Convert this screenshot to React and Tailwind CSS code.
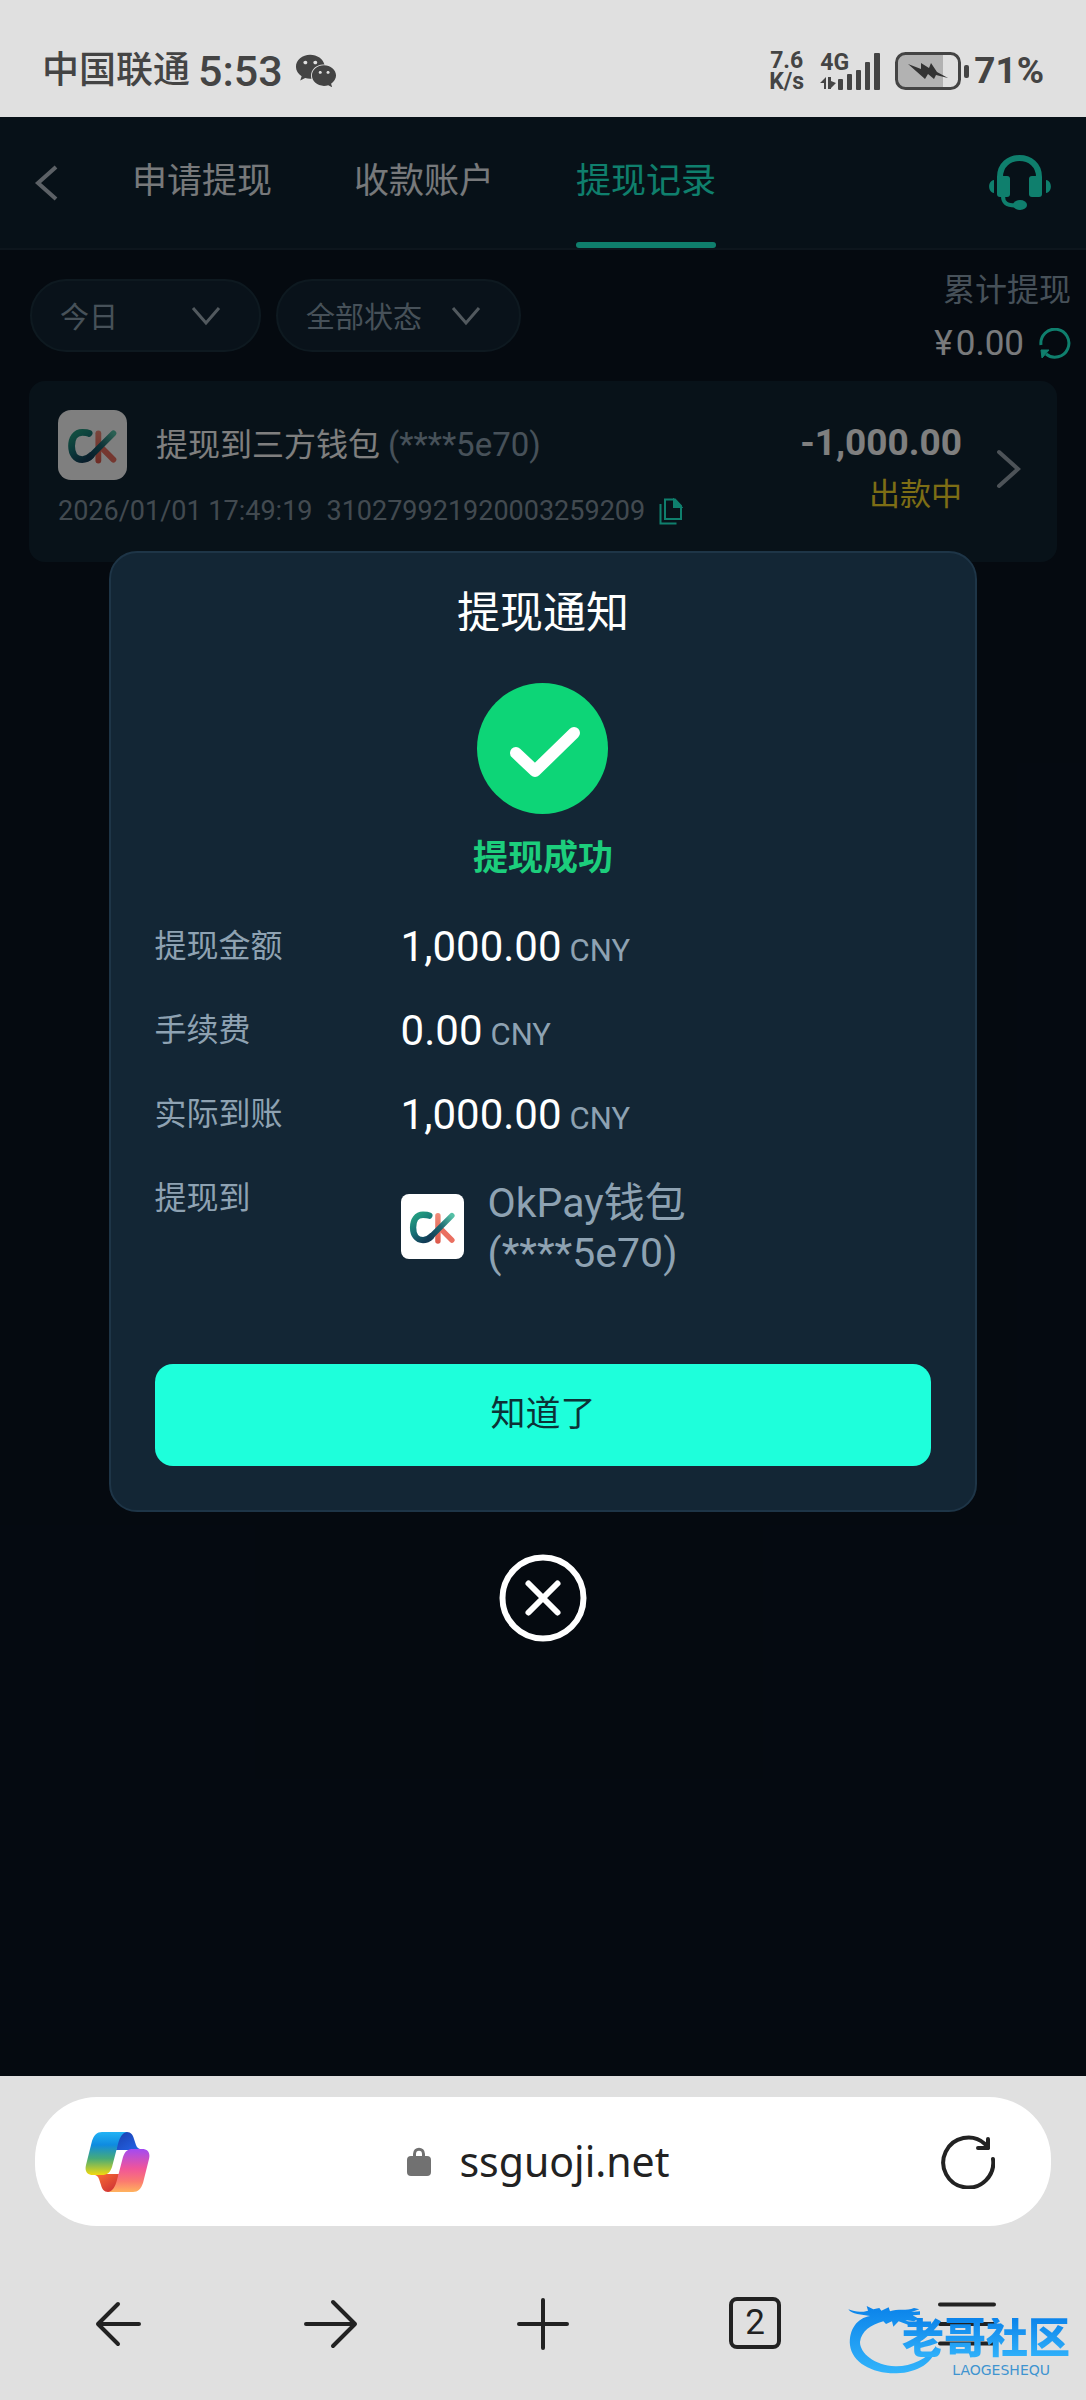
import React, { useState } from 'react';
import { FaWeixin } from 'react-icons/fa';

const tabs = ['申请提现', '收款账户', '提现记录'];

const details = [
  { label: '提现金额', value: '1,000.00' },
  { label: '手续费', value: '0.00' },
  { label: '实际到账', value: '1,000.00' },
];

const WalletLogo = ({ id, className }) => (
  <span className={`flex shrink-0 items-center justify-center bg-white ${className}`}>
    <svg viewBox="0 0 69 72" className="h-full w-full" fill="none" strokeLinecap="round">
      <defs>
        <linearGradient id={`${id}-c`} gradientUnits="userSpaceOnUse" x1="14" y1="26" x2="30" y2="50">
          <stop offset="0" stopColor="#22997f" />
          <stop offset="0.5" stopColor="#167076" />
          <stop offset="1" stopColor="#123c56" />
        </linearGradient>
        <linearGradient id={`${id}-k`} gradientUnits="userSpaceOnUse" x1="30" y1="48" x2="56" y2="24">
          <stop offset="0" stopColor="#123c56" />
          <stop offset="0.5" stopColor="#1d6670" />
          <stop offset="1" stopColor="#55c0a6" />
        </linearGradient>
        <linearGradient id={`${id}-r`} gradientUnits="userSpaceOnUse" x1="40" y1="22" x2="40" y2="54">
          <stop offset="0" stopColor="#f08a78" />
          <stop offset="1" stopColor="#dd5a4c" />
        </linearGradient>
      </defs>
      <path d="M40.500 24V52" stroke={`url(#${id}-r)`} strokeWidth="6" />
      <path d="M45 40L56 51" stroke="#ea6f60" strokeWidth="6" />
      <path d="M31 24C29 23 26 23 24 23C17 23 13 29 13 37C13 45 17 51 24 51C27.500 51 30 50 33 47" stroke={`url(#${id}-c)`} strokeWidth="7" />
      <path d="M31 49L56 24" stroke={`url(#${id}-k)`} strokeWidth="6" />
    </svg>
  </span>
);

const HeadsetIcon = () => (
  <svg viewBox="0 0 62 56" className="h-14 w-[62px]" fill="#1effdb">
    <path d="M11 25V22C11 10 20 3 30.500 3C41 3 50 10 50 22V25" fill="none" stroke="#1effdb" strokeWidth="6" />
    <rect x="8" y="21" width="13" height="21" rx="3" />
    <rect x="40" y="21" width="13" height="21" rx="3" />
    <path d="M5 25C-1.500 26 -1.500 37 5 38ZM57 25C63.500 26 63.500 37 57 38Z" />
    <path d="M14 41C14 48 18 50.500 26 50.500" fill="none" stroke="#1effdb" strokeWidth="4" />
    <ellipse cx="31" cy="50" rx="7" ry="5" />
  </svg>
);

// the lower ribbon is the upper one turned by half a circle
const CopilotIcon = () => (
  <svg viewBox="0 0 65 60" className="h-[60px] w-[65px]">
    <defs>
      <linearGradient id="cp-left" x1="0" y1="0" x2="0" y2="1">
        <stop offset="0" stopColor="#22b3f5" />
        <stop offset="0.300" stopColor="#0f8be0" />
        <stop offset="0.620" stopColor="#47ab78" />
        <stop offset="1" stopColor="#f3d90e" />
      </linearGradient>
      <linearGradient id="cp-right" x1="0" y1="1" x2="0" y2="0">
        <stop offset="0" stopColor="#a24af2" />
        <stop offset="0.450" stopColor="#f0559a" />
        <stop offset="0.750" stopColor="#fb7a70" />
        <stop offset="1" stopColor="#ffb35e" />
      </linearGradient>
      <linearGradient id="cp-top" x1="0" y1="0" x2="1" y2="1">
        <stop offset="0" stopColor="#1a3fae" />
        <stop offset="1" stopColor="#2467ea" />
      </linearGradient>
      <linearGradient id="cp-bottom" x1="0" y1="0" x2="1" y2="1">
        <stop offset="0" stopColor="#c92a36" />
        <stop offset="1" stopColor="#ff7433" />
      </linearGradient>
    </defs>
    <path d="M38 0H42C46 0 48 3 49 7L51 13C52 16 54 17 58 18H31L33 6Z" fill="url(#cp-top)" />
    <path d="M38 0H42C46 0 48 3 49 7L51 13C52 16 54 17 58 18H31L33 6Z" fill="url(#cp-bottom)" transform="rotate(180 32.500 30)" />
    <path d="M17 0H42C37 1 35 5 33 12L27 35C25 41 22 43 17 43H8C2 43 -0.500 39 1 33L7 9C9 3 12 0 17 0Z" fill="url(#cp-left)" />
    <path d="M17 0H42C37 1 35 5 33 12L27 35C25 41 22 43 17 43H8C2 43 -0.500 39 1 33L7 9C9 3 12 0 17 0Z" fill="url(#cp-right)" transform="rotate(180 32.500 30)" />
  </svg>
);

const StatusBar = () => (
  <header className="flex items-center justify-between bg-[#e0e0e0] px-[42px] pt-[47px] pb-[22px] text-[#444]">
    <div className="flex h-12 items-center gap-2 font-medium">
      <span className="text-[37px]">中国联通</span>
      <span className="text-[43px]">5:53</span>
      <FaWeixin size={42} className="ml-1" />
    </div>
    <div className="flex h-12 items-center">
      <div className="mr-4 text-center text-[23px] leading-[21px] font-bold">
        <div>7.6</div>
        <div>K/s</div>
      </div>
      <div className="relative h-[38px] w-[61px]">
        <span className="absolute top-0 left-0 text-[23px] leading-[21px] font-bold">4G</span>
        <svg viewBox="0 0 61 38" className="h-full w-full" fill="#444">
          <path d="M0 31L6 25V37H4V31ZM8 25H11V29L16 31L11 36V37H8Z" />
          <rect x="18" y="27" width="5" height="11" rx="1" />
          <rect x="27" y="22" width="5" height="16" rx="1" />
          <rect x="36" y="18" width="5" height="20" rx="1" />
          <rect x="45" y="10" width="5" height="28" rx="1" />
          <rect x="54" y="1" width="6" height="37" rx="1" />
        </svg>
      </div>
      <svg viewBox="0 0 75 38" className="ml-[14px] h-[38px] w-[75px]">
        <rect x="1.500" y="1.500" width="63" height="35" rx="9" fill="#e0e0e0" />
        <path d="M10 2H48V36H10C5 36 2 33 2 28V10C2 5 5 2 10 2Z" fill="#b2b2b2" />
        <rect x="1.500" y="1.500" width="63" height="35" rx="9" fill="none" stroke="#444" strokeWidth="3" />
        <rect x="69" y="13" width="5" height="13" rx="2" fill="#444" />
        <path d="M13 12L26 17L26 11L34 16L36 11L42 20L53 26L41 23L39 27L33 22L30 27Z" fill="#333" />
      </svg>
      <span className="ml-1 text-[37px] font-bold">71%</span>
    </div>
  </header>
);

const Filter = ({ label, options, className }) => (
  <div className={`relative mt-[9px] h-[73px] ${className}`}>
    <select
      aria-label={label}
      className="h-full w-full appearance-none rounded-full border-2 border-[#1c3341] bg-[#122534] pt-[6px] pl-7 text-[29px] text-[#8ea2b2]"
    >
      {options.map((o) => (
        <option key={o}>{o}</option>
      ))}
    </select>
    <svg viewBox="0 0 30 20" className="pointer-events-none absolute top-[27px] right-10 h-5 w-[30px]" fill="none" stroke="#a4b2bd" strokeWidth="3">
      <path d="M2 2L15 17L28 2" />
    </svg>
  </div>
);

const WithdrawRecord = () => (
  <article className="mx-[29px] flex items-center rounded-2xl bg-[#112532] px-[29px] pt-[29px] pb-[34px]">
    <div className="flex-1">
      <div className="flex items-center">
        <WalletLogo id="rec" className="h-[70px] w-[69px] rounded-[13px]" />
        <h2 className="ml-[29px] text-[32px] leading-[48px] text-white">
          提现到三方钱包 <span className="text-[33px] text-[#8ea2b2]">(****5e70)</span>
        </h2>
      </div>
      <div className="mt-[14px] flex items-center text-[27px] leading-[34px] text-[#8494a1]">
        <time>2026/01/01 17:49:19</time>
        <span className="ml-[14px]">310279921920003259209</span>
        <button aria-label="复制" className="ml-[14px]">
          <svg viewBox="0 0 24 27" className="h-[27px] w-6" fill="none" stroke="#1effdb" strokeWidth="2">
            <path d="M1.500 6V25.500H17.500" />
            <path d="M6 1.500H16L22 8V21H6Z" />
            <path d="M15 2V9H22Z" fill="#1effdb" />
          </svg>
        </button>
      </div>
    </div>
    <div className="text-right">
      <p className="text-[37px] leading-[52px] font-bold text-white">-1,000.00</p>
      <p className="text-[31px] leading-[52px] text-[#fbdc2a]">出款中</p>
    </div>
    <svg viewBox="0 0 26 40" className="mr-[6px] ml-[34px] h-10 w-[26px]" fill="none" stroke="#9aa6b0" strokeWidth="4" strokeLinecap="round">
      <path d="M3 3L22 20L3 37" />
    </svg>
  </article>
);

const NoticeDialog = ({ onClose }) => (
  <div className="absolute inset-0 flex flex-col items-center justify-center bg-black/50">
    <section role="dialog" aria-labelledby="notice-title" className="w-4/5 rounded-[28px] border-2 border-[#1e3547] bg-[#132635] px-11 pt-7 pb-11">
      <h1 id="notice-title" className="text-center text-[43px] leading-[64px] text-white">提现通知</h1>
      <svg viewBox="0 0 131 131" className="mx-auto mt-[38px] size-[131px]">
        <circle cx="65.500" cy="65.500" r="65.500" fill="#0dd577" />
        <path d="M39 70L58 88L97 50" fill="none" stroke="#fff" strokeWidth="12" strokeLinecap="round" strokeLinejoin="round" />
      </svg>
      <p className="mt-5 text-center text-[35px] leading-[50px] font-bold text-[#1cce7c]">提现成功</p>
      <dl className="mt-5 text-[#8ea2b2]">
        {details.map((d) => (
          <div key={d.label} className="flex h-[84px] items-center">
            <dt className="w-[246px] text-[32px]">{d.label}</dt>
            <dd className="flex items-baseline gap-2">
              <span className="text-[42px] text-white">{d.value}</span>
              <span className="text-[31px]">CNY</span>
            </dd>
          </div>
        ))}
        <div className="flex items-start pt-[22px]">
          <dt className="w-[246px] text-[32px] leading-10">提现到</dt>
          <dd className="flex items-center gap-6 text-[41px] leading-[50px]">
            <WalletLogo id="pay" className="mb-1 h-[65px] w-[63px] rounded-lg" />
            <span>
              OkPay钱包
              <br />
              (****5e70)
            </span>
          </dd>
        </div>
      </dl>
      <button onClick={onClose} className="mt-[86px] h-[102px] w-full rounded-[18px] bg-[#1effdb] text-[35px] text-[#0c3236]">
        知道了
      </button>
    </section>
    <button aria-label="关闭" onClick={onClose} className="mt-[42px]">
      <svg viewBox="0 0 88 88" className="size-[88px]" fill="none" stroke="#fff" strokeLinecap="round">
        <circle cx="44" cy="44" r="40.500" strokeWidth="6" />
        <path d="M29.500 29.500L58.500 58.500M58.500 29.500L29.500 58.500" strokeWidth="6" />
      </svg>
    </button>
  </div>
);

const Watermark = () => (
  <div className="pointer-events-none absolute right-4 bottom-[26px] flex h-[70px] w-[222px] flex-col items-end">
    <svg viewBox="24 70 666 210" className="absolute inset-0 h-full w-full">
      <defs>
        <linearGradient id="wm" x1="0" y1="0" x2="0" y2="1">
          <stop offset="0" stopColor="#0b83ea" />
          <stop offset="1" stopColor="#32b4fb" />
        </linearGradient>
      </defs>
      <path
        fill="url(#wm)"
        d="M25 86C45 94 62 96 84 90L80 76L100 86L118 82L124 90L146 80L150 92C172 82 200 92 222 82L238 86L214 94L240 92V102L218 104L236 114L222 122L196 118L218 130L208 134L176 122L160 138L156 122L138 130L130 122C92 132 64 152 60 184C60 218 104 254 166 257C212 258 262 236 288 196C284 246 232 276 170 278C98 280 36 246 30 194C26 146 52 112 90 106L52 100C40 97 30 94 25 86Z"
      />
    </svg>
    <span className="relative mt-[14px] bg-linear-to-b from-[#0b83ea] to-[#32b4fb] bg-clip-text text-[42px] leading-[42px] font-black text-transparent">老哥社区</span>
    <span className="relative mt-1 mr-5 font-['DejaVu_Sans',sans-serif] text-[14px] leading-3 text-[#3f94d0]">LAOGESHEQU</span>
  </div>
);

const BrowserBar = () => (
  <footer className="relative bg-[#e0e0e0] pt-[21px] pb-[49px]">
    <div className="mx-[35px] flex h-[129px] items-center justify-between rounded-[62px] bg-white px-[50px]">
      <button aria-label="Copilot">
        <CopilotIcon />
      </button>
      <label className="mr-[14px] flex items-center gap-7">
        <svg viewBox="0 0 24 29" className="h-[29px] w-6">
          <path d="M7.500 11V7C7.500 0.500 16.500 0.500 16.500 7V11" fill="none" stroke="#717171" strokeWidth="3" />
          <rect y="9" width="24" height="20" rx="4" fill="#717171" />
        </svg>
        <input
          aria-label="网址"
          readOnly
          value="ssguoji.net"
          className="field-sizing-content font-['Noto_Sans',sans-serif] text-[41px] text-[#222]"
        />
      </label>
      <button aria-label="刷新">
        <svg viewBox="0 0 54 54" className="mr-[6px] size-[54px]" fill="none" stroke="#222" strokeWidth="4" strokeLinecap="round" strokeLinejoin="round">
          <path d="M52 24A25 25 0 1 1 44 9L47 13" />
          <path d="M47 4V13H37" />
        </svg>
      </button>
    </div>
    <nav className="mx-[13px] mt-[71px] grid h-[54px] grid-cols-5 justify-items-center">
      <button aria-label="后退">
        <svg viewBox="0 0 54 54" className="size-[54px]" fill="none" stroke="#222" strokeWidth="4" strokeLinecap="round" strokeLinejoin="round">
          <path d="M26 7L6 27L26 47M6 27H47" />
        </svg>
      </button>
      <button aria-label="前进">
        <svg viewBox="0 0 54 54" className="size-[54px]" fill="none" stroke="#222" strokeWidth="4" strokeLinecap="round" strokeLinejoin="round">
          <path d="M29 5L51 27L29 49M51 27H2" />
        </svg>
      </button>
      <button aria-label="新标签页">
        <svg viewBox="0 0 54 54" className="size-[54px]" fill="none" stroke="#222" strokeWidth="4" strokeLinecap="round">
          <path d="M27 3V51M3 27H51" />
        </svg>
      </button>
      <button className="size-[52px] rounded-lg border-4 border-[#222] text-[35px] leading-[44px] text-[#222]">2</button>
      <button aria-label="菜单">
        <svg viewBox="0 0 60 54" className="h-[54px] w-[60px]" fill="none" stroke="#222" strokeWidth="4" strokeLinecap="round">
          <path d="M3 7.500H57M3 27H57M3 46.500H57" />
        </svg>
      </button>
    </nav>
    <Watermark />
  </footer>
);

export default function App() {
  const [open, setOpen] = useState(true);

  return (
    <div className="flex min-h-screen flex-col font-['Roboto','Noto_Sans_CJK_SC',sans-serif]">
      <StatusBar />

      <main className="relative flex-1 bg-[#0a1421]">
        <div className="flex h-[133px] items-center border-b-2 border-[#1a2c3a] bg-[#0f2331] pr-[35px] pl-[34px]">
          <button aria-label="返回">
            <svg viewBox="0 0 24 38" className="h-[38px] w-6" fill="none" stroke="#b9c3cc" strokeWidth="4">
              <path d="M22 3L4 19L22 35" />
            </svg>
          </button>
          <nav className="ml-[74px] flex h-full flex-1 gap-[82px]">
            {tabs.map((tab, i) => (
              <a
                key={tab}
                href="#"
                className={`relative flex items-center text-[35px] ${i === 2 ? 'text-[#1effdb]' : 'text-[#eef2f6]'}`}
              >
                {tab}
                {i === 2 && <span className="absolute inset-x-0 bottom-0 h-[6px] rounded-full bg-[#1effdb]" />}
              </a>
            ))}
          </nav>
          <button aria-label="客服">
            <HeadsetIcon />
          </button>
        </div>

        <div className="flex items-start pt-5 pr-[15px] pb-[15px] pl-[30px]">
          <Filter label="日期" options={['今日', '昨日', '近7日']} className="w-[231px]" />
          <Filter label="状态" options={['全部状态', '出款中', '已完成']} className="ml-[15px] w-[245px]" />
          <div className="ml-auto text-right">
            <p className="text-[32px] leading-10 text-[#8ea2b2]">累计提现</p>
            <p className="mt-3 flex items-center justify-end text-[35px] leading-[44px] text-[#f2f5f8]">
              <span className="mr-[3px]">¥</span>0.00
              <button aria-label="刷新金额" className="ml-[15px]">
                <svg viewBox="0 0 32 32" className="size-8" fill="none" stroke="#1effdb" strokeWidth="3">
                  <path d="M2 17A14 14 0 1 1 7 26" />
                  <path d="M2 22H10L3 30Z" fill="#1effdb" strokeWidth="1" />
                </svg>
              </button>
            </p>
          </div>
        </div>

        <WithdrawRecord />

        {open && <NoticeDialog onClose={() => setOpen(false)} />}
      </main>

      <BrowserBar />
    </div>
  );
}
